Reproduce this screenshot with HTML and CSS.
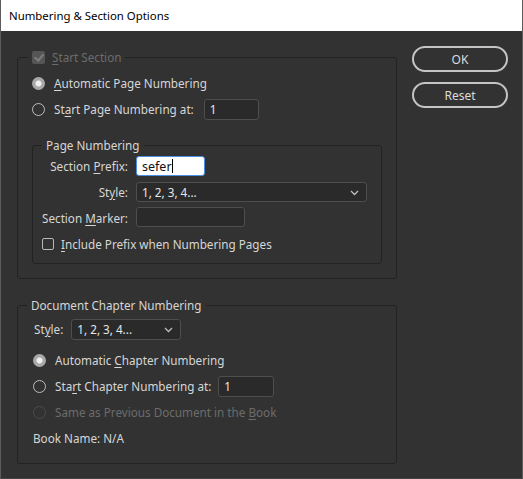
FILE: index.html
```
<!DOCTYPE html>
<html lang="en">
<head>
    <meta charset="UTF-8">
    <title>Numbering &amp; Section Options</title>
    <link rel="stylesheet" href="styles.css">
</head>
<body>

<div class="window">
    <!-- Title bar -->
    <div class="titlebar">Numbering &amp; Section Options</div>

    <div class="dialog">
        <div class="main">
            <!-- Start Section -->
            <fieldset class="group outer">
                <legend class="legend disabled"><span class="check checked off"></span><span><u>S</u>tart Section</span></legend>
                <div class="row"><span class="radio on"></span><span><u>A</u>utomatic Page Numbering</span></div>
                <div class="row"><span class="radio"></span><span>St<u>a</u>rt Page Numbering at:</span><span class="field page-start">1</span></div>

                <fieldset class="group inner">
                    <legend class="legend">Page Numbering</legend>
                    <div class="form-grid">
                        <label>Section <u>P</u>refix:</label>
                        <div><span class="field prefix">sefer<i class="caret"></i></span></div>

                        <label>St<u>y</u>le:</label>
                        <div><span class="field select page-style">1, 2, 3, 4...<svg class="chevron" width="9" height="6" viewBox="0 0 9 6"><polyline points="1,1 4.5,4.5 8,1" fill="none" stroke="#bdbdbd" stroke-width="1.3"/></svg></span></div>

                        <label>Section <u>M</u>arker:</label>
                        <div><span class="field marker"></span></div>

                        <div class="check-row"><span class="check"></span><span><u>I</u>nclude Prefix when Numbering Pages</span></div>
                    </div>
                </fieldset>
            </fieldset>

            <!-- Document Chapter Numbering -->
            <fieldset class="group chapter">
                <legend class="legend">Document Chapter Numbering</legend>
                <div class="row style-row"><span>St<u>y</u>le:</span><span class="field select chapter-style">1, 2, 3, 4...<svg class="chevron" width="9" height="6" viewBox="0 0 9 6"><polyline points="1,1 4.5,4.5 8,1" fill="none" stroke="#bdbdbd" stroke-width="1.3"/></svg></span></div>
                <div class="row"><span class="radio on"></span><span>Automatic <u>C</u>hapter Numbering</span></div>
                <div class="row"><span class="radio"></span><span>Sta<u>r</u>t Chapter Numbering at:</span><span class="field chapter-start">1</span></div>
                <div class="row disabled"><span class="radio off"></span><span>Same as Previous Document in the <u>B</u>ook</span></div>
                <div class="row book">Book Name: N/A</div>
            </fieldset>
        </div>

        <!-- Buttons -->
        <div class="buttons">
            <button class="btn">OK</button>
            <button class="btn">Reset</button>
        </div>
    </div>
</div>

</body>
</html>
```

FILE: styles.css
```
body {
    margin: 0;
    background-color: #323232;
    font-family: "Noto Sans", "Open Sans", sans-serif;
    font-size: 11.7px;
    color: #d6d6d6;
}

.window {
    width: 523px;
    height: 479px;
    box-sizing: border-box;
    border-left: 1px solid #5c5c5c;
    border-right: 1px solid #5c5c5c;
    border-bottom: 1px solid #444;
}

/* Title bar */
.titlebar {
    height: 31px;
    line-height: 31px;
    padding-left: 8px;
    background-color: #fff;
    color: #000;
    font-size: 11.4px;
}

.dialog {
    display: flex;
    padding-left: 16px;
}

.main {
    width: 380px;
    padding-top: 18px;
}

u {
    text-decoration: underline;
    text-underline-offset: 2px;
}

/* Group boxes */
.group {
    margin: 0;
    border: 1px solid #222;
    border-radius: 3px;
    padding: 5px 14px 14px 14px;
    min-width: 0;
}

.legend {
    line-height: 16px;
    padding: 0 4px;
    margin-left: -4px;
    display: flex;
    align-items: center;
}

.legend.disabled {
    color: #6c6c6c;
}

.inner {
    margin-top: 15px;
    padding: 0 0 6px 9px;
}

.inner .legend {
    margin-left: 0;
}

.chapter {
    margin-top: 18px;
    padding: 3px 14px 12px 15px;
}

.chapter .legend {
    margin-left: -6px;
}

.row {
    display: flex;
    align-items: center;
    height: 26px;
    white-space: nowrap;
}

.row.disabled {
    color: #6c6c6c;
}

.style-row {
    margin-bottom: 5px;
    padding-left: 1px;
}

/* Radio buttons */
.radio {
    width: 13px;
    height: 13px;
    box-sizing: border-box;
    border: 1.5px solid #bdbdbd;
    border-radius: 50%;
    margin-right: 9px;
    flex: none;
}

.radio.on {
    border: none;
    background: radial-gradient(circle, #f0f0f0 0, #f0f0f0 2.5px, #a9a9a9 3.5px);
}

.radio.off {
    border-color: #4c4c4c;
}

/* Check boxes */
.check {
    width: 12px;
    height: 12px;
    box-sizing: border-box;
    border: 1px solid #b8b8b8;
    border-radius: 2px;
    margin-right: 7px;
    flex: none;
}

.check.checked.off {
    width: 13px;
    height: 13px;
    border: none;
    background-color: #555;
    position: relative;
}

.check.checked.off::after {
    content: "";
    position: absolute;
    left: 4px;
    top: 1px;
    width: 4px;
    height: 7px;
    border: solid #7c7c7c;
    border-width: 0 2px 2px 0;
    transform: rotate(40deg);
}

/* Text fields */
.field {
    display: inline-flex;
    align-items: center;
    box-sizing: border-box;
    height: 20px;
    padding-left: 5px;
    background-color: #2a2a2a;
    border: 1px solid #4e4e4e;
    border-radius: 3px;
    color: #e6e6e6;
}

.page-start {
    width: 55px;
    height: 21px;
    margin-left: 10px;
}

.chapter-start {
    width: 56px;
    height: 21px;
    margin-left: 7px;
}

.prefix {
    width: 69px;
    background-color: #fff;
    border: 1px solid #4a90e2;
    color: #111;
    font-size: 12.5px;
}

.caret {
    display: inline-block;
    width: 1px;
    height: 14px;
    background-color: #000;
}

.select {
    position: relative;
}

.chevron {
    position: absolute;
    right: 7px;
    top: 7px;
}

.page-style {
    width: 231px;
}

.chapter-style {
    width: 110px;
    height: 21px;
    margin-left: 8px;
}

.marker {
    width: 109px;
}

/* Page numbering form */
.form-grid {
    display: grid;
    grid-template-columns: 86px auto;
    grid-auto-rows: 26px;
    column-gap: 8px;
    align-items: center;
}

.form-grid label {
    text-align: right;
    white-space: nowrap;
}

.check-row {
    grid-column: 1 / 3;
    display: flex;
    align-items: center;
}

/* Buttons */
.buttons {
    display: flex;
    flex-direction: column;
    gap: 10px;
    padding-top: 15px;
    margin-left: 15px;
}

.btn {
    width: 96px;
    height: 26px;
    background: transparent;
    border: 2px solid #c4c4c4;
    border-radius: 13px;
    color: #dcdcdc;
    font-family: "Noto Sans", "Open Sans", sans-serif;
    font-size: 12px;
    cursor: pointer;
}
```
